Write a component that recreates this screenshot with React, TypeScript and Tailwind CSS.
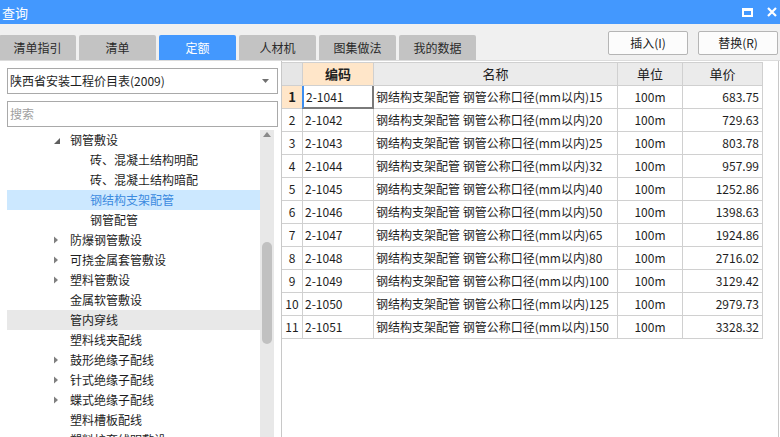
import React from 'react';

const FONT = { fontFamily: '"Noto Sans CJK SC", "Noto Sans", sans-serif' };

type TreeItem = { t: string; lvl: 1 | 2; tog?: 'open' | 'closed'; sel?: boolean; hover?: boolean };

const tree: TreeItem[] = [
  { t: '钢管敷设', lvl: 1, tog: 'open' },
  { t: '砖、混凝土结构明配', lvl: 2 },
  { t: '砖、混凝土结构暗配', lvl: 2 },
  { t: '钢结构支架配管', lvl: 2, sel: true },
  { t: '钢管配管', lvl: 2 },
  { t: '防爆钢管敷设', lvl: 1, tog: 'closed' },
  { t: '可挠金属套管敷设', lvl: 1, tog: 'closed' },
  { t: '塑料管敷设', lvl: 1, tog: 'closed' },
  { t: '金属软管敷设', lvl: 1 },
  { t: '管内穿线', lvl: 1, hover: true },
  { t: '塑料线夹配线', lvl: 1 },
  { t: '鼓形绝缘子配线', lvl: 1, tog: 'closed' },
  { t: '针式绝缘子配线', lvl: 1, tog: 'closed' },
  { t: '蝶式绝缘子配线', lvl: 1, tog: 'closed' },
  { t: '塑料槽板配线', lvl: 1 },
  { t: '塑料护套线明敷设', lvl: 1 },
];

const sizes = [15, 20, 25, 32, 40, 50, 65, 80, 100, 125, 150];
const prices = ['683.75', '729.63', '803.78', '957.99', '1252.86', '1398.63', '1924.86', '2716.02', '3129.42', '2979.73', '3328.32'];

const tabs = ['清单指引', '清单', '定额', '人材机', '图集做法', '我的数据'];

function Toggle({ kind }: { kind?: 'open' | 'closed' }) {
  if (kind === 'open') {
    return (
      <svg width="8" height="8" viewBox="0 0 8 8" className="mt-[2px]">
        <polygon points="7,1 7,7 1,7" fill="#5f5f5f" />
      </svg>
    );
  }
  if (kind === 'closed') {
    return (
      <svg width="8" height="8" viewBox="0 0 8 8">
        <polygon points="1,0.5 5,4 1,7.5" fill="#7f7f7f" />
      </svg>
    );
  }
  return null;
}

export default function App() {
  return (
    <div className="w-[780px] h-[437px] flex flex-col bg-white overflow-hidden text-[12px] text-[#1e1e1e]" style={FONT}>
      {/* title bar */}
      <div className="h-[24px] bg-[#4398fe] flex items-center justify-between pl-[2px] pr-[3px] shrink-0">
        <span className="text-white text-[13px] leading-none">查询</span>
        <div className="flex items-center gap-[14px]">
          <div className="w-[11px] h-[9px] border-[2px] border-t-[3px] border-white" />
          <svg width="10" height="10" viewBox="0 0 10 10">
            <path d="M1 1 L9 9 M9 1 L1 9" stroke="#fff" strokeWidth="2.2" />
          </svg>
        </div>
      </div>

      {/* tab / toolbar strip */}
      <div className="h-[36px] bg-[#f0f0f0] flex justify-between shrink-0">
        <div className="flex items-end gap-[3px] -ml-[1px]">
          {tabs.map((t) => (
            <div
              key={t}
              className={
                'w-[77px] h-[25px] rounded-t-[2px] flex items-center justify-center ' +
                (t === '定额' ? 'bg-[#4398fe] text-white' : 'bg-[#c3c3c3] text-[#2a2a2a]')
              }
            >
              {t}
            </div>
          ))}
        </div>
        <div className="flex gap-[10px] pt-[7px] pr-[2px]">
          <div className="w-[80px] h-[24px] bg-[#fcfcfc] border border-[#b5b5b5] rounded-[2px] flex items-center justify-center text-[#222]">
            插入(I)
          </div>
          <div className="w-[80px] h-[24px] bg-[#fcfcfc] border border-[#b5b5b5] rounded-[2px] flex items-center justify-center text-[#222]">
            替换(R)
          </div>
        </div>
      </div>

      {/* main area */}
      <div className="flex flex-1 min-h-0 border-t border-[#dcdcdc]">
        {/* left panel */}
        <div className="w-[281px] shrink-0 flex flex-col">
          <div className="px-[7px] pt-[7px] pr-[3px] flex flex-col gap-[7px]">
            <div className="h-[26px] border border-[#a9a9a9] flex items-center justify-between pl-[2px] pr-[8px]">
              <span>陕西省安装工程价目表(2009)</span>
              <svg width="7" height="4" viewBox="0 0 7 4">
                <polygon points="0,0 7,0 3.5,4" fill="#707070" />
              </svg>
            </div>
            <div className="h-[26px] border border-[#a9a9a9] flex items-center pl-[2px] text-[#a0a0a0]">搜索</div>
          </div>
          <div className="flex flex-1 min-h-0 mt-[3px] pl-[7px] pr-[7px] overflow-hidden">
            <div className="flex-1 flex flex-col">
              {tree.map((it) => (
                <div
                  key={it.t}
                  className={
                    'h-[20px] shrink-0 flex items-center ' +
                    (it.lvl === 1 ? 'pl-[46px] ' : 'pl-[66px] ') +
                    (it.sel ? 'bg-[#cce8ff] text-[#3b8ae0] ' : '') +
                    (it.hover ? 'bg-[#e8e8e8] ' : '')
                  }
                >
                  <div className="w-[17px] flex items-center">
                    <Toggle kind={it.tog} />
                  </div>
                  <span className="whitespace-nowrap">{it.t}</span>
                </div>
              ))}
            </div>
            <div className="w-[14px] shrink-0 bg-[#e8e8e8] flex flex-col items-center">
              <svg width="8" height="5" viewBox="0 0 8 5" className="mt-[2px]">
                <polygon points="0,5 8,5 4,0" fill="#8a8a8a" />
              </svg>
              <div className="w-[10px] h-[102px] mt-[105px] rounded-full bg-[#c1c1c1]" />
            </div>
          </div>
        </div>

        {/* right panel */}
        <div className="w-[498px] shrink-0 border-l border-r border-[#c8c8c8] pt-[1px]">
          <div className="w-[481px] border-t border-[#d0d0d0] grid grid-cols-[21px_71px_244px_65px_80px]">
            {/* header */}
            <div className="h-[23px] bg-[#e6e6e6] border-r border-b border-[#d0d0d0]" />
            <div className="h-[23px] bg-[#ffe6c9] border-r border-b border-[#d0d0d0] flex items-center justify-center font-bold text-[13px] text-[#222]">编码</div>
            <div className="h-[23px] bg-[#ebebeb] border-r border-b border-[#d0d0d0] flex items-center justify-center text-[13px]">名称</div>
            <div className="h-[23px] bg-[#ebebeb] border-r border-b border-[#d0d0d0] flex items-center justify-center text-[13px]">单位</div>
            <div className="h-[23px] bg-[#ebebeb] border-r border-b border-[#d0d0d0] flex items-center justify-center text-[13px]">单价</div>
            {sizes.map((s, i) => {
              const first = i === 0;
              return (
                <React.Fragment key={s}>
                  <div
                    className={
                      'h-[23px] border-r border-b border-[#d0d0d0] flex items-center justify-center ' +
                      (first ? 'bg-[#ffe6c9] font-bold text-[13px]' : 'bg-white')
                    }
                  >
                    {i + 1}
                  </div>
                  <div
                    className={
                      'h-[23px] flex items-center pl-[2px] ' +
                      (first
                        ? 'border-l-[2px] border-l-[#3d8ef0] border-r-[2px] border-r-[#7a7a7a] border-b-[2px] border-b-[#7a7a7a] -ml-[1px]'
                        : 'border-r border-b border-[#d0d0d0]')
                    }
                  >
                    2-{1041 + i}
                  </div>
                  <div className="h-[23px] border-r border-b border-[#d0d0d0] flex items-center pl-[2px] whitespace-nowrap overflow-hidden">
                    钢结构支架配管 钢管公称口径(mm以内){s}
                  </div>
                  <div className="h-[23px] border-r border-b border-[#d0d0d0] flex items-center justify-center">100m</div>
                  <div className="h-[23px] border-r border-b border-[#d0d0d0] flex items-center justify-end pr-[3px]">{prices[i]}</div>
                </React.Fragment>
              );
            })}
          </div>
        </div>
      </div>
    </div>
  );
}
